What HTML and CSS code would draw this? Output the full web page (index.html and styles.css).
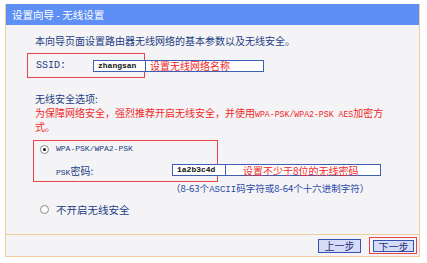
FILE: index.html
```html
<!DOCTYPE html>
<html lang="zh-CN">
<head>
    <meta charset="UTF-8">
    <title>设置向导 - 无线设置</title>
    <link rel="stylesheet" href="styles.css">
</head>
<body>

<div class="panel">
    <div class="title">设置向导 - 无线设置</div>

    <div class="main">
        <p class="intro">本向导页面设置路由器无线网络的基本参数以及无线安全。</p>

        <div class="mark ssid-mark">
            <span class="lbl mono big">SSID:</span>
            <span class="field ssid-field"><b class="mono">zhangsan</b></span>
            <span class="field note ssid-note">设置无线网络名称</span>
        </div>

        <p class="sec-title">无线安全选项:</p>
        <p class="warn">为保障网络安全，强烈推荐开启无线安全，并使用<span class="mono">WPA-PSK/WPA2-PSK AES</span>加密方式。</p>

        <div class="mark psk-mark">
            <div class="radio-row">
                <span class="radio on"></span>
                <span class="mono">WPA-PSK/WPA2-PSK</span>
            </div>
            <div class="psk-row">
                <span class="lbl psk-lbl"><span class="mono">PSK</span>密码:</span>
                <span class="field psk-field"><b class="mono">1a2b3c4d</b></span>
                <span class="field note psk-note">设置不少于8位的无线密码</span>
            </div>
        </div>
        <p class="hint">（8-63个<span class="mono">ASCII</span>码字符或8-64个十六进制字符）</p>

        <div class="radio-row off-row">
            <span class="radio"></span>
            <span>不开启无线安全</span>
        </div>
    </div>

    <div class="foot">
        <button class="btn">上一步</button>
        <span class="next-mark"><button class="btn">下一步</button></span>
    </div>
</div>

</body>
</html>
```

FILE: styles.css
```css
body {
    margin: 0;
    background: #ffffff;
    font-family: "Noto Sans CJK SC", sans-serif;
    font-size: 10px;
    color: #243c84;
}
p {
    margin: 0;
}
.mono {
    font-family: "Liberation Mono", monospace;
    font-size: 8px;
    line-height: 1;
}
.big {
    font-size: 10px;
}
.panel {
    margin: 4px 0 0 5px;
    width: 413px;
    border: 1px solid #f0cd9c;
    border-top: none;
    background: #f4f4f6;
}
.title {
    height: 21px;
    line-height: 21px;
    padding-left: 6px;
    background: #5d8ff4;
    color: #ffffff;
    font-size: 10.5px;
}
.main {
    height: 209px;
    padding-left: 29px;
    box-sizing: border-box;
    padding-top: 9px;
}
.intro {
    line-height: 14px;
}
.mark {
    border: 1px solid #e8424a;
    box-sizing: border-box;
}
.ssid-mark {
    margin: 5px 0 0 -8px;
    width: 118px;
    height: 25px;
    padding-left: 8px;
    display: flex;
    align-items: center;
}
.lbl {
    flex-shrink: 0;
}
.ssid-mark .lbl {
    width: 57px;
}
.field {
    flex-shrink: 0;
    height: 12px;
    box-sizing: border-box;
    border: 1px solid #3f5fb5;
    background: #ffffff;
    color: #111111;
    display: flex;
    align-items: center;
    padding-left: 4px;
}
.ssid-field {
    width: 53px;
}
.ssid-note {
    width: 118px;
    border-left: none;
}
.note {
    color: #f02828;
    font-size: 10px;
}
.sec-title {
    margin-top: 14px;
    line-height: 14px;
}
.warn {
    width: 354px;
    line-height: 14px;
    color: #f02828;
}
.warn .mono {
    font-size: 8.2px;
}
.psk-mark {
    margin: 6px 0 0 -2px;
    width: 185px;
    height: 42px;
    padding: 1px 0 0 6px;
}
.radio-row {
    display: flex;
    align-items: center;
    height: 14px;
    gap: 7px;
}
.radio {
    width: 9px;
    height: 9px;
    border-radius: 50%;
    border: 1px solid #8a8a8a;
    background: #ffffff;
    box-sizing: border-box;
    position: relative;
}
.radio.on::after {
    content: "";
    position: absolute;
    left: 2px;
    top: 2px;
    width: 3px;
    height: 3px;
    border-radius: 50%;
    background: #111111;
}
.psk-row {
    display: flex;
    align-items: center;
    height: 14px;
    margin: 7px 0 0 16px;
}
.psk-lbl {
    width: 116px;
}
.psk-field {
    width: 53px;
    border-right: none;
}
.psk-note {
    width: 156px;
    padding-left: 17px;
}
.hint {
    margin-left: 136px;
    line-height: 12px;
    color: #2a48a8;
    font-size: 9.5px;
}
.hint .mono {
    font-size: 9px;
}
.off-row {
    margin: 7px 0 0 5px;
    font-size: 10.5px;
}
.foot {
    border-top: 1px solid #f0cd9c;
    height: 21px;
    display: flex;
    justify-content: flex-end;
    align-items: center;
    gap: 8px;
    padding-right: 2px;
}
.btn {
    width: 43px;
    height: 14px;
    padding: 0;
    border: 1px solid #3452b4;
    background: #d6dbf8;
    color: #1c2f78;
    font-family: "Noto Sans CJK SC", sans-serif;
    font-size: 10px;
    line-height: 12px;
}
.next-mark {
    border: 1px solid #e8424a;
    padding: 2px 2px 1px 3px;
    display: flex;
}
.next-mark .btn {
    width: 41px;
    height: 12px;
}
```
